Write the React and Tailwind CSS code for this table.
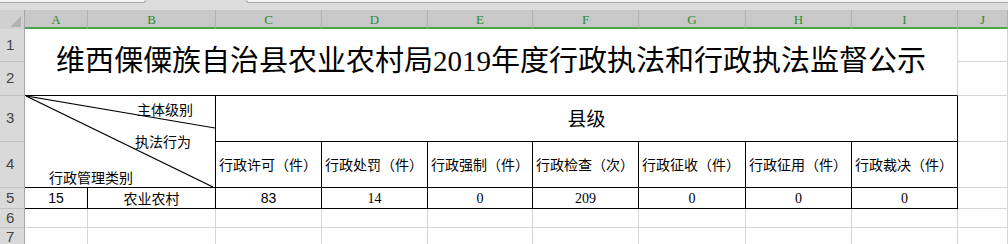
import React from 'react';

const letters = ['A', 'B', 'C', 'D', 'E', 'F', 'G', 'H', 'I', 'J'];
const heads = ['行政许可（件）', '行政处罚（件）', '行政强制（件）', '行政检查（次）', '行政征收（件）', '行政征用（件）', '行政裁决（件）'];
const counts = ['83', '14', '0', '209', '0', '0', '0'];

function RowHead({ n }) {
  return (
    <div className="flex items-center pl-[6px] bg-[#d9d9d9] border-r border-r-[#a6a6a6] border-b border-b-[#c2c2c2] text-[15px] text-[#444] font-['Liberation_Sans',sans-serif]">
      {n}
    </div>
  );
}

function Gray({ className = '', children }) {
  return <div className={`border-r border-b border-[#d4d4d4] ${className}`}>{children}</div>;
}

function Boxed({ className = '', children }) {
  return <div className={`border-r border-b border-black ${className}`}>{children}</div>;
}

export default function App() {
  return (
    <div className="h-[244px] w-[1008px] overflow-hidden bg-white text-black font-['Noto_Sans_CJK_SC',sans-serif]">
      <div className="grid grid-cols-[25px_63px_128px_106px_106px_105px_106px_107px_106px_106px_1fr] grid-rows-[10px_19px_33px_34px_46px_46px_21px_19px_19px]">
        {/* strip under the formula bar */}
        <div className="col-span-11 flex items-start gap-[100px] bg-[#dcdcdc]">
          <div className="h-[3px] w-[146px] rounded-br-[3px] border-r border-b border-[#a9a9a9] bg-[#f3f3f3]" />
          <div className="h-[3px] flex-1 rounded-bl-[3px] border-l border-b border-[#a9a9a9] bg-[#f3f3f3]" />
        </div>

        {/* column letters */}
        <div className="flex items-end justify-end bg-[#d0d0d0] border-r border-r-[#a6a6a6] pb-[2px] pr-[3px]">
          <svg width="11" height="11" viewBox="0 0 11 11">
            <polygon points="11,0 11,11 0,11" fill="#b3b3b3" />
          </svg>
        </div>
        {letters.map((l) => (
          <div
            key={l}
            className="flex items-center justify-center pt-[3px] bg-[#c8c8c8] border-r border-r-[#b1b1b1] border-b-2 border-b-[#48a548] text-[13px] text-[#2e8a2e] font-['Liberation_Serif',serif]"
          >
            {l}
          </div>
        ))}

        {/* title */}
        <RowHead n="1" />
        <div className="col-span-9 row-span-2 flex items-center justify-center pb-[2px] border-r border-r-[#d4d4d4] border-b border-b-black text-[29px] leading-none font-['Liberation_Serif','Noto_Sans_CJK_SC',serif]">
          维西傈僳族自治县农业农村局2019年度行政执法和行政执法监督公示
        </div>
        <Gray />
        <RowHead n="2" />
        <Gray />

        {/* header rows */}
        <RowHead n="3" />
        <Boxed className="relative col-span-2 row-span-2 flex flex-col text-[14px] leading-[16px]">
          <svg className="absolute inset-0" width="190" height="91" viewBox="0 0 190 91">
            <line x1="1" y1="0" x2="190" y2="32" stroke="#000" strokeWidth="1.2" />
            <line x1="1" y1="0" x2="188" y2="91" stroke="#000" strokeWidth="1.2" />
          </svg>
          <span className="relative ml-[112px] mt-[5px]">主体级别</span>
          <span className="relative ml-[110px] mt-[16px]">执法行为</span>
          <span className="relative ml-[24px] mt-[20px]">行政管理类别</span>
        </Boxed>
        <Boxed className="col-span-7 flex items-center justify-center text-[19px]">县级</Boxed>
        <Gray />

        <RowHead n="4" />
        {heads.map((h) => (
          <Boxed key={h} className="flex items-center pl-[3px] text-[14px] whitespace-nowrap">
            {h}
          </Boxed>
        ))}
        <Gray />

        {/* data */}
        <RowHead n="5" />
        <Boxed className="flex items-center justify-center text-[14px] font-['Liberation_Sans',sans-serif]">15</Boxed>
        <Boxed className="flex items-center justify-center text-[14px]">农业农村</Boxed>
        {counts.map((c, i) => (
          <Boxed
            key={i}
            className={`flex items-center justify-center text-[14px] ${
              i === 0 ? "font-['Liberation_Sans',sans-serif]" : "font-['Liberation_Serif',serif]"
            }`}
          >
            {c}
          </Boxed>
        ))}
        <Gray />

        {/* empty rows */}
        <RowHead n="6" />
        {letters.map((l) => (
          <Gray key={'6' + l} />
        ))}
        <RowHead n="7" />
        {letters.map((l) => (
          <Gray key={'7' + l} />
        ))}
      </div>
    </div>
  );
}
